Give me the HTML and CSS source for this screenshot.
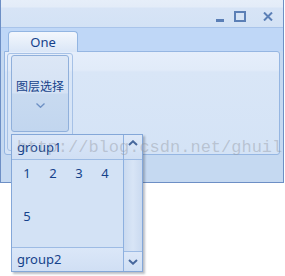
FILE: index.html
```html
<!DOCTYPE html>
<html lang="zh">
<head>
    <meta charset="UTF-8">
    <title>Ribbon Gallery</title>
    <link rel="stylesheet" href="styles.css">
</head>
<body>
    <div class="window">
        <div class="titlebar">
            <div class="caption-buttons">
                <svg class="cap-min" width="8" height="3" viewBox="0 0 8 3"><rect x="0" y="0" width="8" height="3" fill="#5b7fb6"/></svg>
                <svg class="cap-max" width="12" height="11" viewBox="0 0 12 11"><rect x="1" y="1" width="10" height="9" fill="none" stroke="#5b7fb6" stroke-width="2"/></svg>
                <svg class="cap-close" width="10" height="9" viewBox="0 0 10 9"><path d="M1 0.5 L9 8.5 M9 0.5 L1 8.5" stroke="#5b7fb6" stroke-width="2"/></svg>
            </div>
        </div>
        <div class="tabstrip">
            <div class="tab">One</div>
        </div>
        <div class="panel">
            <div class="group">
                <div class="big-button">
                    <span class="big-label">图层选择</span>
                    <svg class="big-arrow" width="9" height="5" viewBox="0 0 9 5"><path d="M0.5 0.5 L4.5 4.3 L8.5 0.5" fill="none" stroke="#6d90c4" stroke-width="1.3"/></svg>
                </div>
            </div>
        </div>
        <div class="footer"></div>
    </div>

    <div class="gallery-popup">
        <div class="gallery-list">
            <div class="gallery-header">group1</div>
            <div class="gallery-items">
                <span class="item">1</span>
                <span class="item">2</span>
                <span class="item">3</span>
                <span class="item">4</span>
                <span class="item">5</span>
            </div>
            <div class="gallery-header gallery-footer">group2</div>
        </div>
        <div class="scrollbar">
            <div class="scroll-btn scroll-up">
                <svg width="10" height="6" viewBox="0 0 10 6"><path d="M1 5 L5 1.3 L9 5" fill="none" stroke="#46679c" stroke-width="2"/></svg>
            </div>
            <div class="scroll-track"></div>
            <div class="scroll-btn scroll-down">
                <svg width="10" height="6" viewBox="0 0 10 6"><path d="M1 1 L5 4.7 L9 1" fill="none" stroke="#46679c" stroke-width="2"/></svg>
            </div>
        </div>
    </div>

    <div class="watermark">http://blog.csdn.net/ghuil</div>
</body>
</html>
```

FILE: styles.css
```css
body {
    margin: 0;
    width: 285px;
    height: 276px;
    background: #fff;
    position: relative;
    overflow: hidden;
    font-family: "Noto Sans", "Noto Sans CJK SC", sans-serif;
    color: #15428b;
}
.window {
    width: 284px;
    height: 183px;
    box-sizing: border-box;
    border: 1px solid #6d8fc5;
    border-top: none;
    background: #c5d9f1;
    display: flex;
    flex-direction: column;
}
.titlebar {
    height: 28px;
    box-sizing: border-box;
    border-bottom: 1px solid #a9c4ea;
    background: linear-gradient(#e6eef9 0, #e3ecf8 7px, #d7e4f6 8px, #d3e2f5 100%);
    display: flex;
    justify-content: flex-end;
    align-items: center;
}
.caption-buttons {
    display: flex;
    align-items: center;
    margin-right: 10px;
    margin-top: 5px;
}
.cap-min {
    margin-top: 8px;
}
.cap-max {
    margin-left: 10px;
}
.cap-close {
    margin-left: 17px;
    margin-top: 1px;
}
.tabstrip {
    height: 23px;
    background: #bfd7f7;
    display: flex;
    align-items: flex-end;
    padding-left: 7px;
}
.tab {
    width: 70px;
    height: 21px;
    box-sizing: border-box;
    border: 1px solid #92b5e2;
    border-bottom: none;
    border-radius: 4px 4px 0 0;
    background: linear-gradient(#f3f7fd, #e4edf9 60%, #dae6f7);
    text-align: center;
    font-size: 13px;
    line-height: 21px;
    position: relative;
    z-index: 1;
    margin-bottom: -1px;
}
.panel {
    height: 104px;
    box-sizing: border-box;
    margin: 0 3px 0 3px;
    border: 1px solid #95b6e2;
    border-radius: 0 3px 3px 3px;
    background: linear-gradient(#e5eefb 0, #e1ebf9 18px, #d9e6f7 20px, #d4e3f6 100%);
    padding: 1px 0 0 2px;
}
.group {
    width: 66px;
    height: 98px;
    box-sizing: border-box;
    border: 1px solid #a6c1e6;
    border-radius: 3px;
    padding: 1px 0 0 3px;
}
.big-button {
    width: 58px;
    height: 77px;
    box-sizing: border-box;
    border: 1px solid #90b0db;
    border-radius: 3px;
    background: linear-gradient(#dce7f6 0, #d5e2f4 37px, #c8daf0 38px, #c2d6ef 100%);
    display: flex;
    flex-direction: column;
    align-items: center;
}
.big-label {
    font-family: "Noto Sans CJK SC", sans-serif;
    font-size: 12px;
    line-height: 16px;
    margin-top: 22px;
}
.big-arrow {
    margin-top: 9px;
}
.footer {
    flex: 1;
}
.gallery-popup {
    position: absolute;
    left: 11px;
    top: 134px;
    width: 132px;
    height: 138px;
    box-sizing: border-box;
    border: 1px solid #84a7d8;
    background: #d3e2f5;
    box-shadow: 2px 2px 2px rgba(60, 70, 90, 0.35);
    display: flex;
}
.gallery-list {
    width: 111px;
    display: flex;
    flex-direction: column;
}
.gallery-header {
    height: 25px;
    box-sizing: border-box;
    border-bottom: 1px solid #9dbbe4;
    background: linear-gradient(#dbe7f8, #d0dff4);
    font-size: 13px;
    line-height: 24px;
    padding-left: 5px;
}
.gallery-footer {
    height: 24px;
    border-bottom: none;
    border-top: 1px solid #9dbbe4;
    line-height: 23px;
}
.gallery-items {
    flex: 1;
    display: grid;
    grid-template-columns: repeat(4, 26px);
    grid-auto-rows: 26px;
    row-gap: 17px;
    padding-left: 2px;
    align-content: start;
}
.item {
    font-size: 13px;
    line-height: 26px;
    text-align: center;
}
.scrollbar {
    width: 19px;
    box-sizing: border-box;
    border-left: 1px solid #8db0df;
    display: flex;
    flex-direction: column;
    background: linear-gradient(90deg, #cadaf0, #d8e5f6 50%, #cadaf0);
}
.scroll-btn {
    display: flex;
    justify-content: center;
    align-items: center;
    background: linear-gradient(#dde8f8, #cfdff4);
    box-sizing: border-box;
}
.scroll-up {
    height: 25px;
    border-bottom: 1px solid #9dbbe4;
    align-items: flex-start;
    padding-top: 5px;
}
.scroll-track {
    flex: 1;
}
.scroll-down {
    height: 20px;
    border-top: 1px solid #9dbbe4;
}
.watermark {
    position: absolute;
    left: 17px;
    top: 138px;
    font-family: "Liberation Mono", monospace;
    font-size: 17px;
    line-height: 20px;
    color: rgba(150, 155, 165, 0.45);
    white-space: nowrap;
    pointer-events: none;
}
```
